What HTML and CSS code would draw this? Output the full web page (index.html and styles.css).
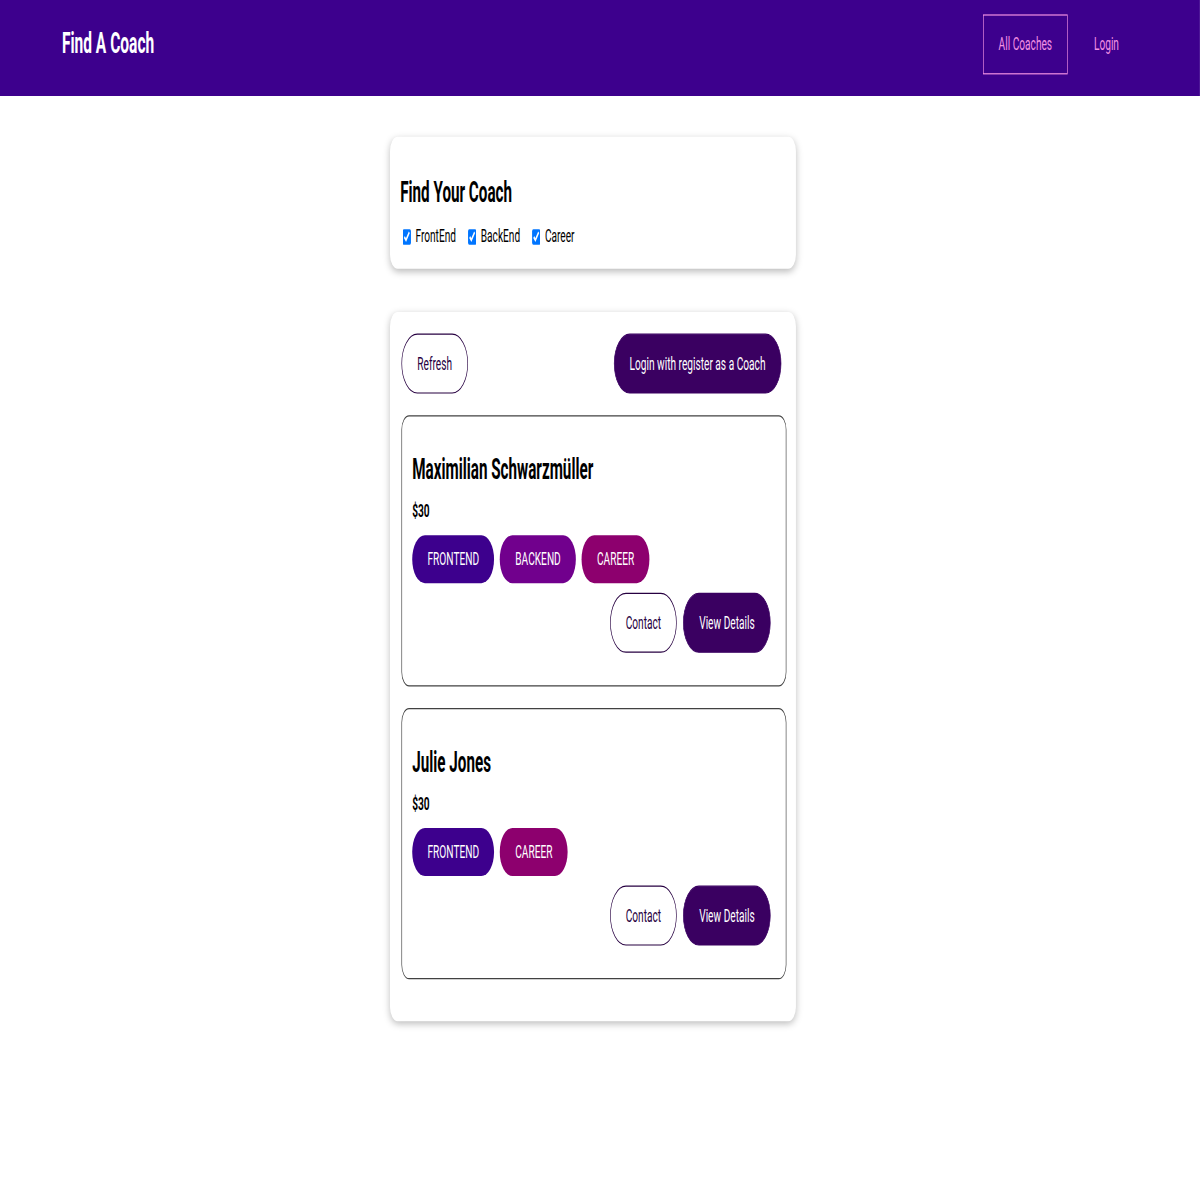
FILE: index.html
```html
<!DOCTYPE html>
<html lang="en">
<head>
<meta charset="utf-8">
<title>Find A Coach</title>
<link rel="stylesheet" href="styles.css">
</head>
<body>
<div class="frame">
<div class="stage">
  <header class="site-header">
    <nav class="nav">
      <h1 class="brand"><a href="#">Find A Coach</a></h1>
      <ul class="nav-links">
        <li><a class="nav-link active" href="#">All Coaches</a></li>
        <li><a class="nav-link" href="#">Login</a></li>
      </ul>
    </nav>
  </header>
  <main class="content">
    <section>
      <div class="card filter-card">
        <h2 class="filter-title">Find Your Coach</h2>
        <div class="filter-row">
          <span class="filter-option"><input type="checkbox" id="frontend" checked><label for="frontend">FrontEnd</label></span>
          <span class="filter-option"><input type="checkbox" id="backend" checked><label for="backend">BackEnd</label></span>
          <span class="filter-option"><input type="checkbox" id="career" checked><label for="career">Career</label></span>
        </div>
      </div>
    </section>
    <section>
      <div class="card list-card">
        <div class="controls">
          <button class="btn btn-outline" type="button">Refresh</button>
          <a class="btn" href="#">Login with register as a Coach</a>
        </div>
        <ul class="coach-list">
          <li class="coach">
            <h3 class="coach-name">Maximilian Schwarzmüller</h3>
            <h4 class="coach-rate">$30</h4>
            <div class="badges">
              <span class="badge frontend">FRONTEND</span>
              <span class="badge backend">BACKEND</span>
              <span class="badge career">CAREER</span>
            </div>
            <div class="actions">
              <a class="btn btn-outline" href="#">Contact</a>
              <a class="btn" href="#">View Details</a>
            </div>
          </li>
          <li class="coach">
            <h3 class="coach-name">Julie Jones</h3>
            <h4 class="coach-rate">$30</h4>
            <div class="badges">
              <span class="badge frontend">FRONTEND</span>
              <span class="badge career">CAREER</span>
            </div>
            <div class="actions">
              <a class="btn btn-outline" href="#">Contact</a>
              <a class="btn" href="#">View Details</a>
            </div>
          </li>
        </ul>
      </div>
    </section>
  </main>
</div>
</div>
</body>
</html>
```
FILE: styles.css
```css
html, body {
  margin: 0;
  padding: 0;
  overflow: hidden;
  background: #ffffff;
}

.frame {
  width: 1200px;
  height: 1200px;
  overflow: hidden;
}

/* The page is drawn at its native size and squeezed into the frame,
   as in the reference capture. */
.stage {
  width: 1892px;
  height: 1000px;
  transform: scale(0.6342, 1.2);
  transform-origin: 0 0;
  font-family: Roboto, "Liberation Sans", sans-serif;
  font-size: 16px;
  line-height: 1.5;
  color: #000000;
}

.site-header {
  height: 80px;
  box-sizing: border-box;
  padding-bottom: 7px;
  background: #3d008d;
  display: flex;
  align-items: center;
}

.nav {
  width: 90%;
  margin: 0 auto;
  display: flex;
  justify-content: space-between;
  align-items: center;
}

.brand {
  margin: 0 0 0 3px;
  font-size: 24.5px;
  line-height: 1.5;
  font-weight: 700;
}

.brand a {
  color: #ffffff;
  text-decoration: none;
}

.nav-links {
  list-style: none;
  margin: 0;
  padding: 0;
  display: flex;
  align-items: center;
}

.nav-links li {
  margin: 0 8px;
}

.nav-link {
  display: inline-block;
  padding: 12px 24px;
  color: #f391e3;
  text-decoration: none;
  border: 1px solid transparent;
}

.nav-link.active {
  border-color: #f391e3;
}

.content {
  padding-right: 22px;
}

.card {
  box-sizing: border-box;
  max-width: 640px;
  margin: 0 auto;
  border-radius: 12px;
  box-shadow: 0 2px 8px rgba(0, 0, 0, 0.26);
  padding: 16px;
  background: #ffffff;
}

.filter-card {
  margin-top: 34px;
  padding-bottom: 15px;
}

.list-card {
  margin-top: 36px;
  padding: 18px 15px 17px 18px;
}

.filter-title {
  margin: 12px 0 7px;
  font-size: 24px;
  font-weight: 700;
}

.filter-row {
  display: flex;
  align-items: center;
}

.filter-option {
  margin-right: 15px;
  display: inline-flex;
  align-items: center;
}

.filter-option input {
  margin: 3px 3px 3px 4px;
}

.filter-option label {
  margin-left: 4px;
}

.controls {
  display: flex;
  justify-content: space-between;
  align-items: center;
}

.btn {
  display: inline-block;
  padding: 12px 24px;
  font: inherit;
  background: #3a0061;
  border: 1px solid #3a0061;
  color: #ffffff;
  border-radius: 30px;
  margin-right: 8px;
  text-decoration: none;
  cursor: pointer;
}

.btn-outline {
  background: transparent;
  border-color: #270041;
  color: #270041;
}

.coach-list {
  list-style: none;
  margin: 0;
  padding: 0;
}

.coach {
  margin: 18px 0;
  border: 1px solid #424242;
  border-radius: 12px;
  padding: 16px 16px 19px;
}

.coach-name {
  margin: 10px 0 5px;
  font-size: 24px;
  font-weight: 700;
}

.coach-rate {
  margin: 5px 0 8px;
  font-size: 16px;
  font-weight: 700;
}

.badges {
  margin: 8px 0;
  display: flex;
  gap: 9px;
}

.badge {
  display: inline-block;
  padding: 8px 24px;
  border-radius: 30px;
  color: #ffffff;
}

.badge.frontend {
  background: #3d008d;
}

.badge.backend {
  background: #71008d;
}

.badge.career {
  background: #8d006e;
}

.actions {
  margin: 8px 0;
  display: flex;
  justify-content: flex-end;
  gap: 2px;
}
```
